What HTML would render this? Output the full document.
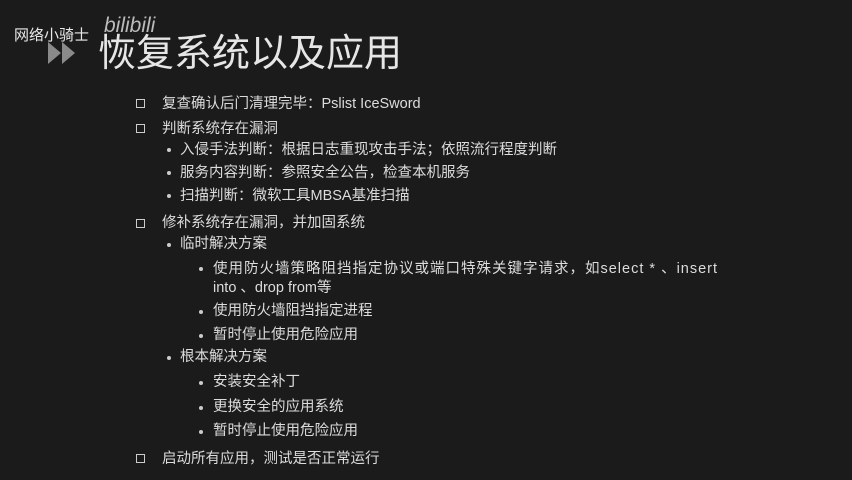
<!DOCTYPE html><html><head><meta charset="utf-8"><style>
body{margin:0;width:852px;height:480px;background:#1b1b1b;overflow:hidden;font-family:"Liberation Sans","Noto Sans CJK SC",sans-serif;color:#dcdcdc;position:relative}
.l{position:absolute;font-size:14.5px;line-height:18px;white-space:nowrap}
.sq{position:absolute;width:7px;height:7px;border:1.5px solid #ccc}
.b{position:absolute;width:4px;height:4px;border-radius:50%;background:#ccc}
</style></head><body>
<div style="position:absolute;left:14px;top:24px;font-size:15px;color:#e8e8e8">网络小骑士</div>
<div style="position:absolute;left:104px;top:14px;font-size:21px;font-style:italic;color:#bbb;letter-spacing:0px">bilibili</div>
<svg style="position:absolute;left:48px;top:42px" width="30" height="24"><polygon points="0,0 13,11 0,22" fill="#8a8a8a"/><polygon points="14,0 27,11 14,22" fill="#8a8a8a"/></svg>
<div style="position:absolute;left:98px;top:31px;font-size:38px;line-height:46px;color:#e6e6e6">恢复系统以及应用</div>
<div class="sq" style="left:136px;top:99px"></div><div class="l" style="left:162px;top:95px">复查确认后门清理完毕：Pslist IceSword</div>
<div class="sq" style="left:136px;top:124px"></div><div class="l" style="left:162px;top:120px">判断系统存在漏洞</div>
<div class="b" style="left:167px;top:148px"></div><div class="l" style="left:180px;top:141px">入侵手法判断：根据日志重现攻击手法；依照流行程度判断</div>
<div class="b" style="left:167px;top:171px"></div><div class="l" style="left:180px;top:164px">服务内容判断：参照安全公告，检查本机服务</div>
<div class="b" style="left:167px;top:194px"></div><div class="l" style="left:180px;top:187px">扫描判断：微软工具MBSA基准扫描</div>
<div class="sq" style="left:136px;top:219px"></div><div class="l" style="left:162px;top:214px">修补系统存在漏洞，并加固系统</div>
<div class="b" style="left:167px;top:243px"></div><div class="l" style="left:180px;top:235px">临时解决方案</div>
<div class="b" style="left:199px;top:267px"></div><div class="l" style="left:213px;top:260px;letter-spacing:1px">使用防火墙策略阻挡指定协议或端口特殊关键字请求，如select * 、insert</div>
<div class="l" style="left:213px;top:279px">into 、drop from等</div>
<div class="b" style="left:199px;top:310px"></div><div class="l" style="left:213px;top:302px">使用防火墙阻挡指定进程</div>
<div class="b" style="left:199px;top:334px"></div><div class="l" style="left:213px;top:326px">暂时停止使用危险应用</div>
<div class="b" style="left:167px;top:356px"></div><div class="l" style="left:180px;top:348px">根本解决方案</div>
<div class="b" style="left:199px;top:381px"></div><div class="l" style="left:213px;top:373px">安装安全补丁</div>
<div class="b" style="left:199px;top:406px"></div><div class="l" style="left:213px;top:398px">更换安全的应用系统</div>
<div class="b" style="left:199px;top:430px"></div><div class="l" style="left:213px;top:422px">暂时停止使用危险应用</div>
<div class="sq" style="left:136px;top:454px"></div><div class="l" style="left:162px;top:450px">启动所有应用，测试是否正常运行</div>
</body></html>
